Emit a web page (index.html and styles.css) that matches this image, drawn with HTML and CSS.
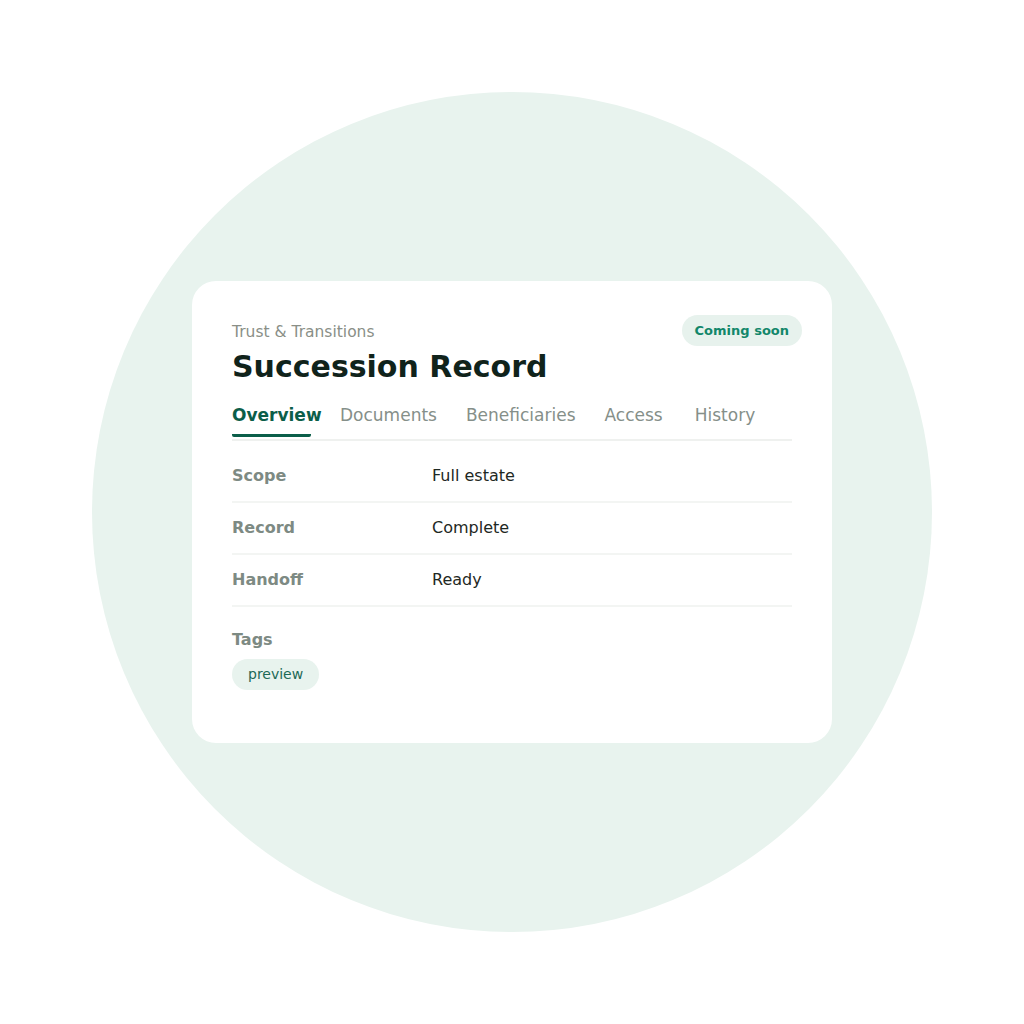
FILE: index.html
```html
<!DOCTYPE html>
<html lang="en">
<head>
<meta charset="utf-8">
<title>Succession Record</title>
<link rel="stylesheet" href="styles.css">
</head>
<body>
<div class="page">
  <div class="circle">
    <div class="card">
      <span class="badge">Coming soon</span>
      <div class="eyebrow">Trust &amp; Transitions</div>
      <h1 class="title">Succession Record</h1>
      <nav class="tabs">
        <span class="tab tab-active">Overview</span>
        <span class="tab">Documents</span>
        <span class="tab">Beneficiaries</span>
        <span class="tab">Access</span>
        <span class="tab tab-last">History</span>
      </nav>
      <div class="rows">
        <div class="row"><span class="label">Scope</span><span class="value">Full estate</span></div>
        <div class="row"><span class="label">Record</span><span class="value">Complete</span></div>
        <div class="row"><span class="label">Handoff</span><span class="value">Ready</span></div>
      </div>
      <div class="tags">
        <div class="label">Tags</div>
        <div class="tag-list"><span class="tag">preview</span></div>
      </div>
    </div>
  </div>
</div>
</body>
</html>
```
FILE: styles.css
```css
html, body {
  margin: 0;
  padding: 0;
  background: #ffffff;
}
body {
  font-family: "DejaVu Sans", Verdana, sans-serif;
}
.page {
  width: 1024px;
  height: 1024px;
  display: flex;
  align-items: center;
  justify-content: center;
}
.circle {
  width: 840px;
  height: 840px;
  border-radius: 50%;
  background: #e8f3ee;
  display: flex;
  align-items: center;
  justify-content: center;
}
.card {
  position: relative;
  box-sizing: border-box;
  width: 640px;
  background: #ffffff;
  border-radius: 24px;
  padding: 42px 40px 53px;
}
.badge {
  position: absolute;
  top: 34px;
  right: 30px;
  height: 31px;
  line-height: 31px;
  padding: 0 13px;
  border-radius: 16px;
  background: #e7f2ed;
  color: #12876a;
  font-size: 13px;
  font-weight: bold;
}
.eyebrow {
  font-size: 15.5px;
  line-height: 18px;
  color: #8a8f87;
}
.title {
  margin: 8px 0 0;
  font-size: 30px;
  line-height: 36px;
  font-weight: bold;
  color: #10231b;
}
.tabs {
  display: flex;
  gap: 29px;
  margin-top: 20px;
  border-bottom: 2px solid #eff1ef;
}
.tab {
  font-size: 17px;
  line-height: 20px;
  color: #858f89;
  padding-bottom: 9px;
  margin-bottom: 2px;
  border-bottom: 3px solid transparent;
  white-space: nowrap;
}
.tab-active {
  width: 79px;
  font-weight: bold;
  color: #0b5e49;
  border-bottom-color: #0b5e49;
  border-radius: 2px;
}
.tab-last {
  margin-left: 3px;
}
.rows {
  margin-top: 10px;
}
.row {
  display: grid;
  grid-template-columns: 200px 1fr;
  padding: 16px 0;
  border-bottom: 2px solid #f3f5f3;
  font-size: 16px;
  line-height: 18px;
}
.label {
  font-size: 16px;
  line-height: 18px;
  font-weight: bold;
  color: #7d8a83;
}
.value {
  color: #1e2823;
}
.tags {
  margin-top: 24px;
}
.tag-list {
  display: flex;
  margin-top: 10px;
}
.tag {
  font-size: 14px;
  line-height: 17px;
  padding: 7px 16px;
  border-radius: 16px;
  background: #e8f3ee;
  color: #1d6a56;
}
```
